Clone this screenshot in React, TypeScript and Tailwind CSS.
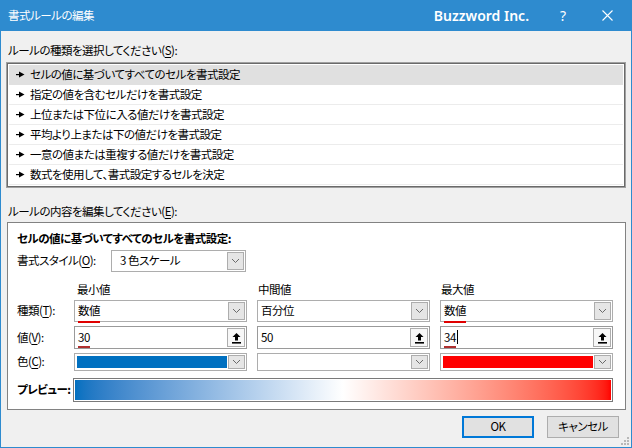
import React from "react";

function Chevron() {
  return (
    <svg width="9" height="6" viewBox="0 0 9 6">
      <path d="M1 1L4.5 4.5L8 1" fill="none" stroke="#6a6a6a" strokeWidth="1" />
    </svg>
  );
}

function DropBtn() {
  return (
    <div className="flex w-[17px] shrink-0 items-center justify-center border border-[#adadad] bg-[#e5e5e5]">
      <Chevron />
    </div>
  );
}

function UpBtn() {
  return (
    <div className="flex w-[18px] shrink-0 items-center justify-center border border-[#adadad] bg-[#f7f7f7]">
      <svg width="11" height="12" viewBox="0 0 11 12">
        <path d="M5.5 1L1.5 5H4V8.5H7V5H9.5Z" fill="#000" />
        <rect x="1" y="10" width="9" height="1.6" fill="#000" />
      </svg>
    </div>
  );
}

function Combo({ children }: { children?: React.ReactNode }) {
  return (
    <div className="flex h-[22px] border border-[#adadad] bg-white p-px">
      <div className="flex flex-1 items-center pl-[2px]">{children}</div>
      <DropBtn />
    </div>
  );
}

function ColorCombo({ fill }: { fill?: string }) {
  return (
    <div className="flex h-[18px] border border-[#adadad] bg-white p-px">
      <div className="flex-1 p-px">
        {fill === "blue" && <div className="h-full w-full bg-[#0070c0]" />}
        {fill === "red" && <div className="h-full w-full bg-[#ff0000]" />}
      </div>
      <DropBtn />
    </div>
  );
}

function ValueBox({ value, caret }: { value: string; caret?: boolean }) {
  return (
    <div className="flex h-[23px] border border-[#9a9a9a] bg-white p-px">
      <div className="flex flex-1 items-center pl-[2px]">
        <span className="relative">
          {value}
          {caret && <span className="absolute right-[-2px] top-[1px] h-[14px] w-px bg-black" />}
          {caret !== undefined && (
            <span className="absolute left-0 right-0 bottom-[-2px] h-[2px] bg-[#b03030]" />
          )}
        </span>
      </div>
      <UpBtn />
    </div>
  );
}

function Squiggle({ text }: { text: string }) {
  return (
    <span className="relative">
      {text}
      <span className="absolute left-0 right-0 bottom-[-3px] h-[2px] bg-[#e00000]" />
    </span>
  );
}

function Arrow() {
  return (
    <svg width="9" height="7" viewBox="0 0 9 7" className="shrink-0">
      <rect x="0" y="3" width="4" height="1.2" fill="#000" />
      <path d="M3 0.5L8.5 3.6L3 6.5Z" fill="#000" />
    </svg>
  );
}

const rules = [
  "セルの値に基づいてすべてのセルを書式設定",
  "指定の値を含むセルだけを書式設定",
  "上位または下位に入る値だけを書式設定",
  "平均より上または下の値だけを書式設定",
  "一意の値または重複する値だけを書式設定",
  "数式を使用して、書式設定するセルを決定",
];

export default function App() {
  return (
    <div className="flex h-[448px] w-[632px] flex-col border-x border-b border-[#2e8bcf] bg-[#f0f0f0] font-['Noto_Sans_CJK_JP',sans-serif] text-[11.5px] tracking-[-0.5px] text-black [font-feature-settings:'palt']">
      {/* Title bar */}
      <div className="flex h-[31px] shrink-0 items-center bg-[#2e8bcf] pl-[7px] text-white">
        <span className="text-[11.5px]">書式ルールの編集</span>
        <span className="ml-auto font-['Noto_Sans',sans-serif] text-[14px] font-semibold tracking-normal">Buzzword Inc.</span>
        <span className="ml-[28px] w-[12px] text-center font-['Noto_Sans',sans-serif] text-[14px] tracking-normal">?</span>
        <span className="ml-[32px] mr-[18px] flex w-[12px] justify-center">
          <svg width="11" height="11" viewBox="0 0 11 11">
            <path d="M0.5 0.5L10.5 10.5M10.5 0.5L0.5 10.5" stroke="#fff" strokeWidth="1.1" />
          </svg>
        </span>
      </div>

      {/* Label 1 */}
      <div className="mt-[12px] h-[14px] pl-[7px] leading-[14px]">
        ルールの種類を選択してください(<span className="underline underline-offset-2">S</span>):
      </div>

      {/* List */}
      <div className="ml-[5px] mt-[5px] w-[620px] border border-[#a0a0a0]">
        <div className="border border-[#6a6a6a] bg-white p-px">
          {rules.map((r, i) => (
            <div
              key={r}
              className={`flex h-[20px] items-center gap-[5px] border-b pl-[7px] ${
                i === 0 ? "border-[#e0e0e0] bg-[#e0e0e0]" : "border-[#ececec]"
              }`}
            >
              <Arrow />
              <span>{r}</span>
            </div>
          ))}
        </div>
      </div>

      {/* Label 2 */}
      <div className="mt-[16px] h-[14px] pl-[7px] leading-[14px]">
        ルールの内容を編集してください(<span className="underline underline-offset-2">E</span>):
      </div>

      {/* Group */}
      <div className="ml-[6px] mt-[4px] flex h-[188px] w-[619px] flex-col border border-[#828282] bg-white pl-[9px]">
        <div className="mt-[8px] h-[14px] font-bold leading-[14px]">セルの値に基づいてすべてのセルを書式設定:</div>
        <div className="mt-[5px] flex h-[22px] items-center">
          <span className="w-[94px]">
            書式スタイル(<span className="underline underline-offset-2">O</span>):
          </span>
          <div className="w-[135px]">
            <Combo>
              <span className="pl-[5px]">3 色スケール</span>
            </Combo>
          </div>
        </div>

        <div className="mt-[10px] grid grid-cols-[47px_173px_173px_173px] gap-x-[10px]">
          <div />
          <div className="h-[14px] pl-[3px] leading-[14px]">最小値</div>
          <div className="h-[14px] pl-[1px] leading-[14px]">中間値</div>
          <div className="h-[14px] pl-[1px] leading-[14px]">最大値</div>
        </div>

        <div className="mt-[4px] grid grid-cols-[47px_173px_173px_173px] gap-x-[10px] gap-y-[4px]">
          <div className="flex items-center whitespace-nowrap">
            種類(<span className="underline underline-offset-2">T</span>):
          </div>
          <Combo>
            <Squiggle text="数値" />
          </Combo>
          <Combo>百分位</Combo>
          <Combo>
            <Squiggle text="数値" />
          </Combo>

          <div className="flex items-center whitespace-nowrap">
            値(<span className="underline underline-offset-2">V</span>):
          </div>
          <ValueBox value="30" caret={false} />
          <ValueBox value="50" />
          <ValueBox value="34" caret={true} />

          <div className="flex items-center whitespace-nowrap">
            色(<span className="underline underline-offset-2">C</span>):
          </div>
          <ColorCombo fill="blue" />
          <ColorCombo />
          <ColorCombo fill="red" />
        </div>

        <div className="mt-[7px] grid h-[24px] grid-cols-[47px_173px_173px_173px] gap-x-[10px]">
          <div className="flex items-center whitespace-nowrap font-bold">プレビュー:</div>
          <div className="col-span-3 ml-[-1px] h-[24px] border border-[#7a7a7a] bg-white p-px">
            <div className="h-full w-full bg-linear-to-r from-[#0070c0] via-white to-[#ff0000]" />
          </div>
        </div>
      </div>

      {/* Buttons */}
      <div className="relative mt-[6px] flex flex-1 justify-end pr-[12px]">
        <div className="flex h-[22px] w-[72px] items-center justify-center border-2 border-[#0078d7] bg-[#e1e1e1]">
          OK
        </div>
        <div className="ml-[13px] flex h-[22px] w-[72px] items-center justify-center border border-[#adadad] bg-[#e1e1e1]">
          キャンセル
        </div>
        <svg width="10" height="10" viewBox="0 0 10 10" className="absolute bottom-[1px] right-[1px]">
          <rect x="7" y="1" width="2" height="2" fill="#b8b8b8" />
          <rect x="4" y="4" width="2" height="2" fill="#b8b8b8" />
          <rect x="7" y="4" width="2" height="2" fill="#b8b8b8" />
          <rect x="1" y="7" width="2" height="2" fill="#b8b8b8" />
          <rect x="4" y="7" width="2" height="2" fill="#b8b8b8" />
          <rect x="7" y="7" width="2" height="2" fill="#b8b8b8" />
        </svg>
      </div>
    </div>
  );
}
